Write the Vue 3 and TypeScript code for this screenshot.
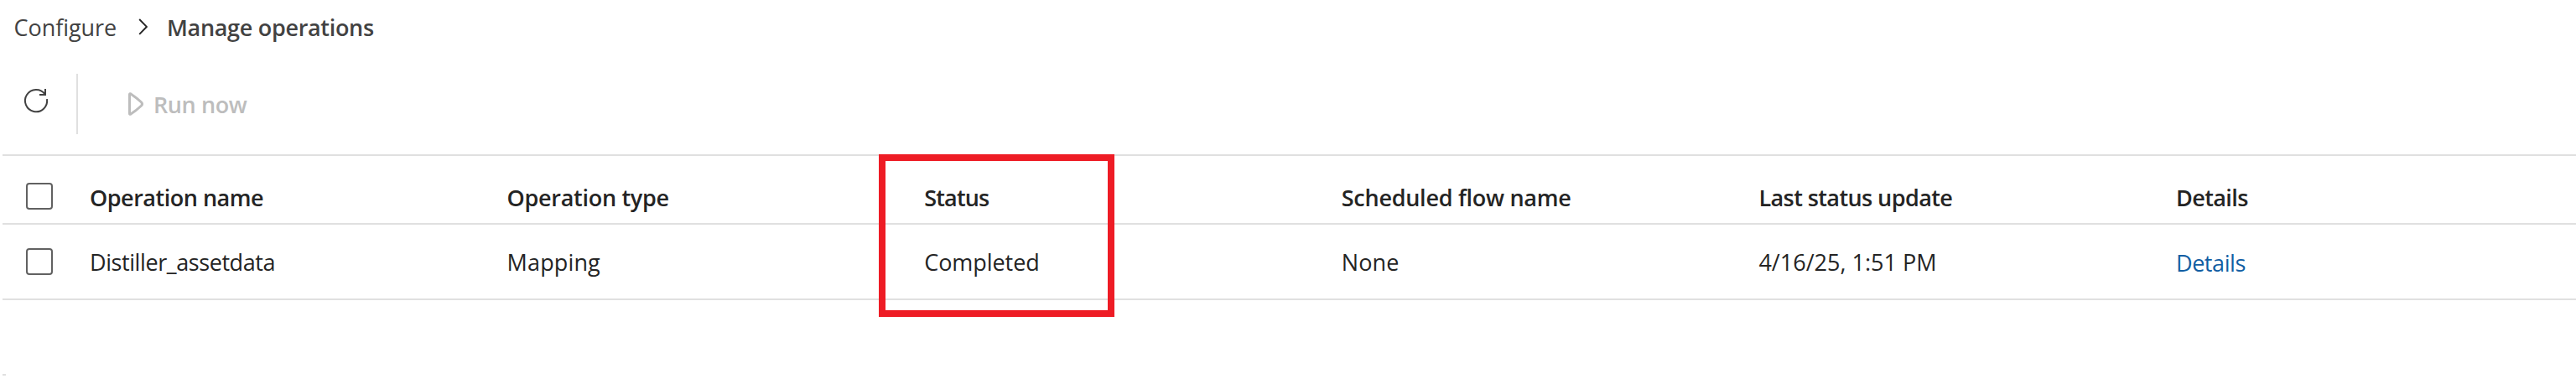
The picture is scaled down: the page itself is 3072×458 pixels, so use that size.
<script setup lang="ts">
interface Cell {
  text: string
  spacing: number
}

const headers: Cell[] = [
  { text: 'Operation name', spacing: -0.49 },
  { text: 'Operation type', spacing: -0.29 },
  { text: 'Status', spacing: -0.82 },
  { text: 'Scheduled flow name', spacing: -0.264 },
  { text: 'Last status update', spacing: -0.576 },
  { text: 'Details', spacing: -0.57 },
]

const cells: Cell[] = [
  { text: 'Distiller_assetdata', spacing: -0.42 },
  { text: 'Mapping', spacing: 0.13 },
  { text: 'Completed', spacing: -0.06 },
  { text: 'None', spacing: 0.11 },
  { text: '4/16/25, 1:51 PM', spacing: 0.01 },
]
</script>

<template>
  <main class="page">
    <nav class="breadcrumb">
      <a class="crumb">Configure</a>
      <svg class="chevron" viewBox="0 0 12 20" aria-hidden="true">
        <path d="M1.2 1 L9.9 9.9 L1.2 18.8" />
      </svg>
      <span class="crumb current">Manage operations</span>
    </nav>

    <div class="toolbar">
      <button class="refresh" aria-label="Refresh">
        <svg viewBox="0 0 28 28">
          <path d="M27 12.2 A13.1 13.1 0 1 1 24.6 6.4" />
          <path d="M25 0 V7 H18" />
        </svg>
      </button>
      <button class="run" disabled>
        <svg viewBox="0 0 18 28">
          <path d="M1.5 2.8 Q1.5 1.2 2.9 1.9 Q9.5 6.2 15.6 12 Q17.4 14 15.6 16 Q9.5 21.8 2.9 26.1 Q1.5 26.8 1.5 25.2 Z" />
        </svg>
        <span>Run now</span>
      </button>
    </div>

    <section class="table">
      <div class="row head">
        <span class="check"></span>
        <span v-for="h in headers" :key="h.text" class="cell" :style="{ letterSpacing: h.spacing + 'px' }">{{ h.text }}</span>
      </div>
      <div class="row">
        <span class="check"></span>
        <span v-for="c in cells" :key="c.text" class="cell" :style="{ letterSpacing: c.spacing + 'px' }">{{ c.text }}</span>
        <a class="cell link">Details</a>
      </div>
      <div class="highlight"></div>
    </section>
    <div class="stub"></div>
  </main>
</template>

<style>
body {
  background: #fff;
}
</style>

<style scoped>
.page {
  box-sizing: border-box;
  height: 458px;
  padding: 12px 0 0 3px;
  overflow: hidden;
  background: #fff;
  color: #242424;
  font: 400 27px/41px "Open Sans", "Noto Sans", sans-serif;
}
.breadcrumb {
  display: flex;
  height: 40px;
  padding-left: 13.5px;
  color: #424242;
}
.crumb {
  width: 148px;
  letter-spacing: -0.06px;
  white-space: nowrap;
}
.current {
  width: auto;
  margin-left: 22.5px;
  font-weight: 600;
  letter-spacing: -0.31px;
}
.chevron {
  width: 12px;
  height: 20px;
  margin-top: 10px;
  fill: none;
  stroke: #242424;
  stroke-width: 1.9;
}
.toolbar {
  display: flex;
  height: 72px;
  margin-top: 36px;
}
button {
  padding: 0;
  border: 0;
  background: none;
  font: inherit;
}
.refresh {
  box-sizing: border-box;
  display: flex;
  width: 90px;
  padding: 18px 0 0 26px;
  border-right: 2px solid #e0e0e0;
}
.refresh svg {
  width: 28px;
  height: 28px;
  overflow: visible;
  fill: none;
  stroke: #424242;
  stroke-width: 2;
}
.run {
  display: flex;
  align-items: flex-start;
  gap: 12px;
  padding: 16px 0 0 60px;
  color: #bdbdbd;
  font-weight: 600;
  letter-spacing: -0.4px;
}
.run svg {
  width: 18px;
  height: 28px;
  margin-top: 6px;
  fill: none;
  stroke: #bdbdbd;
  stroke-width: 3;
}
.table {
  position: relative;
  margin-top: 24px;
  border-top: 2px solid #e0e0e0;
}
.row {
  box-sizing: border-box;
  display: grid;
  grid-template-columns: 104px repeat(6, 497.6px);
  height: 90px;
  padding-top: 24px;
  border-bottom: 2px solid #e0e0e0;
}
.head {
  height: 82px;
  padding-top: 29px;
  font-weight: 600;
}
.check {
  box-sizing: border-box;
  width: 32px;
  height: 32px;
  margin: 4px 0 0 28px;
  border: 2px solid #616161;
  border-radius: 4px;
}
.head .check {
  margin-top: 3px;
}
.cell {
  white-space: nowrap;
}
.link {
  padding-top: 1px;
  color: #115ea3;
  letter-spacing: -0.43px;
}
.highlight {
  position: absolute;
  top: -2px;
  left: 1045px;
  box-sizing: border-box;
  width: 281px;
  height: 194px;
  border: 8px solid #ee1c25;
}
.stub {
  width: 4px;
  height: 2px;
  margin-top: 88px;
  background: #e0e0e0;
}
</style>
